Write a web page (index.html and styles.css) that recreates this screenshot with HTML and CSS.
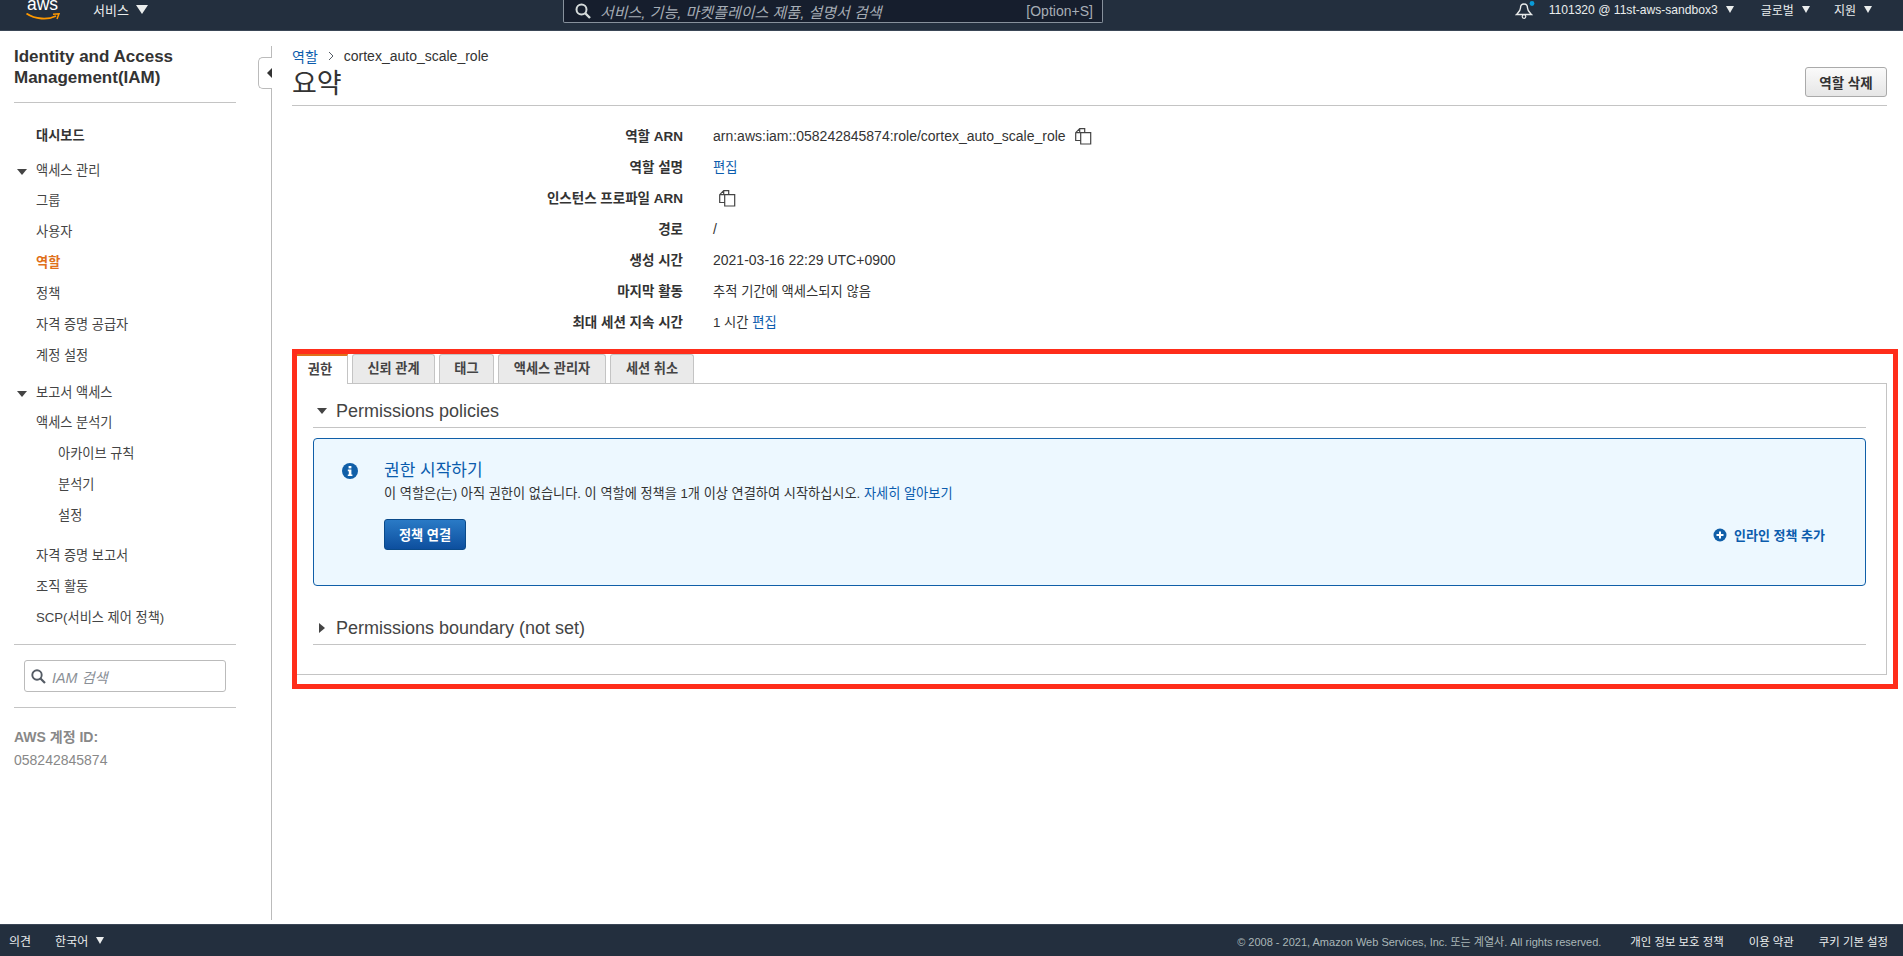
FILE: index.html
```html
<!DOCTYPE html>
<html lang="ko">
<head>
    <meta charset="UTF-8">
    <title>IAM 역할 요약</title>
    <link rel="stylesheet" href="styles.css">
</head>
<body>
    <header class="topbar">
        <div class="aws-logo">
            <span class="aws-word">aws</span>
            <svg class="aws-smile" width="34" height="8" viewBox="0 0 34 8">
                <path d="M0.5 0.5C9 6.5 22 7 30 3" fill="none" stroke="#f90" stroke-width="1.8"/>
                <path d="M27 1.2L33 0.8L31 6" fill="none" stroke="#f90" stroke-width="1.5"/>
            </svg>
        </div>
        <span class="top-link services">서비스</span><i class="caret caret-big"></i>
        <div class="top-search">
            <svg width="16" height="16" viewBox="0 0 16 16"><circle cx="6.5" cy="6.5" r="5" fill="none" stroke="#d5dbdb" stroke-width="2"/><path d="M10 10l5 5" stroke="#d5dbdb" stroke-width="2.4"/></svg>
            <span class="top-search-text">서비스, 기능, 마켓플레이스 제품, 설명서 검색</span>
            <span class="top-search-key">[Option+S]</span>
        </div>
        <div class="top-right">
            <svg class="bell" width="20" height="18" viewBox="0 0 20 18">
                <path d="M9 3C6.5 3 5.5 4.8 5.5 7C5.5 10 3.5 11.5 1.5 13.5H16.5C14.5 11.5 12.5 10 12.5 7C12.5 4.8 11.5 3 9 3Z" fill="none" stroke="#e8eaea" stroke-width="1.4"/>
                <circle cx="9" cy="15.5" r="1.8" fill="none" stroke="#e8eaea" stroke-width="1.2"/>
                <circle cx="17" cy="2.5" r="2.4" fill="#0a9bd8"/>
            </svg>
            <span class="top-link account">1101320 @ 11st-aws-sandbox3</span><i class="caret"></i>
            <span class="top-link region">글로벌</span><i class="caret"></i>
            <span class="top-link support">지원</span><i class="caret"></i>
        </div>
    </header>

    <div class="page">
        <aside class="sidebar">
            <h2 class="side-title">Identity and Access Management(IAM)</h2>
            <ul class="side-nav">
                <li class="side-item side-strong">대시보드</li>
                <li class="side-head"><i class="tri-down"></i>액세스 관리</li>
                <li class="side-item">그룹</li>
                <li class="side-item">사용자</li>
                <li class="side-item side-active">역할</li>
                <li class="side-item">정책</li>
                <li class="side-item">자격 증명 공급자</li>
                <li class="side-item">계정 설정</li>
                <li class="side-head side-head-second"><i class="tri-down"></i>보고서 액세스</li>
                <li class="side-item">액세스 분석기</li>
                <li class="side-item side-sub">아카이브 규칙</li>
                <li class="side-item side-sub">분석기</li>
                <li class="side-item side-sub">설정</li>
                <li class="side-item side-gap">자격 증명 보고서</li>
                <li class="side-item">조직 활동</li>
                <li class="side-item">SCP(서비스 제어 정책)</li>
            </ul>
            <div class="side-search-wrap">
                <div class="side-search">
                    <svg width="15" height="15" viewBox="0 0 15 15"><circle cx="6" cy="6" r="4.7" fill="none" stroke="#545b64" stroke-width="1.9"/><path d="M9.5 9.5l4.5 4.5" stroke="#545b64" stroke-width="2.2"/></svg>
                    <span>IAM 검색</span>
                </div>
            </div>
            <div class="side-account">
                <strong>AWS 계정 ID:</strong>
                <span>058242845874</span>
            </div>
            <div class="side-toggle"><i class="tri-left"></i></div>
        </aside>

        <main class="content">
            <div class="content-head">
                <div>
                    <div class="crumbs">
                        <a href="#">역할</a>
                        <svg width="8" height="10" viewBox="0 0 8 10"><path d="M2 1l4 4-4 4" fill="none" stroke="#545b64" stroke-width="1"/></svg>
                        <span>cortex_auto_scale_role</span>
                    </div>
                    <h1 class="page-title">요약</h1>
                </div>
                <button class="btn-grey" type="button">역할 삭제</button>
            </div>

            <div class="details">
                <div class="detail-row">
                    <span class="detail-label">역할 ARN</span>
                    <span>arn:aws:iam::058242845874:role/cortex_auto_scale_role
                        <svg class="copy-icon" width="17" height="17" viewBox="0 0 17 17"><path d="M5.5 12.5H0.7V4.7L4.7 0.7H9.7V4.7M4.7 0.7V4.7H0.7M5.7 4.7H15.7V16H5.7Z" fill="none" stroke="#444" stroke-width="1.2"/></svg>
                    </span>
                </div>
                <div class="detail-row">
                    <span class="detail-label">역할 설명</span>
                    <span class="ko"><a href="#">편집</a></span>
                </div>
                <div class="detail-row">
                    <span class="detail-label">인스턴스 프로파일 ARN</span>
                    <span>
                        <svg class="copy-icon" width="17" height="17" viewBox="0 0 17 17"><path d="M5.5 12.5H0.7V4.7L4.7 0.7H9.7V4.7M4.7 0.7V4.7H0.7M5.7 4.7H15.7V16H5.7Z" fill="none" stroke="#444" stroke-width="1.2"/></svg>
                    </span>
                </div>
                <div class="detail-row">
                    <span class="detail-label">경로</span>
                    <span>/</span>
                </div>
                <div class="detail-row">
                    <span class="detail-label">생성 시간</span>
                    <span>2021-03-16 22:29 UTC+0900</span>
                </div>
                <div class="detail-row">
                    <span class="detail-label">마지막 활동</span>
                    <span class="ko">추적 기간에 액세스되지 않음</span>
                </div>
                <div class="detail-row">
                    <span class="detail-label">최대 세션 지속 시간</span>
                    <span class="ko">1 시간 <a href="#">편집</a></span>
                </div>
            </div>

            <div class="tab-area">
                <div class="tabs">
                    <div class="tab tab-active">권한</div>
                    <div class="tab tab-trust">신뢰 관계</div>
                    <div class="tab tab-tag">태그</div>
                    <div class="tab tab-access">액세스 관리자</div>
                    <div class="tab tab-session">세션 취소</div>
                </div>
                <div class="tab-panel">
                    <div class="section-head"><i class="tri-down"></i>Permissions policies</div>
                    <div class="info-box">
                        <svg class="info-icon" width="16" height="16" viewBox="0 0 16 16">
                            <circle cx="8" cy="8" r="8" fill="#105fa8"/>
                            <rect x="6.6" y="3" width="2.8" height="2.4" fill="#fff"/>
                            <path d="M5.8 6.6H9.4V11.4H10.4V13H5.8V11.4H6.8V8.2H5.8Z" fill="#fff"/>
                        </svg>
                        <div class="info-body">
                            <div class="info-title">권한 시작하기</div>
                            <div class="info-text">이 역할은(는) 아직 권한이 없습니다. 이 역할에 정책을 1개 이상 연결하여 시작하십시오. <a href="#">자세히 알아보기</a></div>
                            <div class="info-actions">
                                <button class="btn-blue" type="button">정책 연결</button>
                                <a class="add-inline" href="#">
                                    <svg width="14" height="14" viewBox="0 0 14 14"><circle cx="7" cy="7" r="6.5" fill="#105fa8"/><path d="M7 3.5v7M3.5 7h7" stroke="#fff" stroke-width="2"/></svg>
                                    인라인 정책 추가
                                </a>
                            </div>
                        </div>
                    </div>
                    <div class="section-head section-boundary"><i class="tri-right"></i>Permissions boundary (not set)</div>
                </div>
                <div class="red-mark"></div>
            </div>
        </main>
    </div>

    <footer class="footer">
        <span class="foot-link">의견</span>
        <span class="foot-link foot-lang">한국어</span><i class="caret"></i>
        <div class="foot-right">
            <span class="foot-copy">© 2008 - 2021, Amazon Web Services, Inc. 또는 계열사. All rights reserved.</span>
            <span class="foot-link">개인 정보 보호 정책</span>
            <span class="foot-link">이용 약관</span>
            <span class="foot-link">쿠키 기본 설정</span>
        </div>
    </footer>
</body>
</html>
```

FILE: styles.css
```css
body {
    margin: 0;
    height: 100vh;
    display: flex;
    flex-direction: column;
    overflow: hidden;
    background: #fff;
    color: #16191f;
    font-family: "Liberation Sans", "Noto Sans CJK KR", sans-serif;
    font-size: 14px;
}

a {
    color: #0b5cad;
    text-decoration: none;
}

ul {
    list-style: none;
    margin: 0;
    padding: 0;
}

/* top bar */
.topbar {
    flex: none;
    height: 19px;
    padding-bottom: 11px;
    display: flex;
    align-items: center;
    background: #232f3e;
    border-bottom: 1px solid #3a4656;
    color: #eaeded;
    font-size: 13px;
    overflow: hidden;
}

.aws-logo {
    position: relative;
    align-self: flex-start;
    width: 36px;
    height: 20px;
    margin-left: 26px;
}

.aws-word {
    position: absolute;
    left: 1px;
    top: -8px;
    color: #fff;
    font-size: 17.5px;
    line-height: 24px;
}

.aws-smile {
    position: absolute;
    left: 0;
    top: 13px;
}

.top-link {
    white-space: nowrap;
}

.services {
    margin-left: 31px;
}

.caret {
    display: inline-block;
    width: 0;
    height: 0;
    margin-left: 8px;
    border-left: 4.5px solid transparent;
    border-right: 4.5px solid transparent;
    border-top: 7px solid #eaeded;
}

.caret-big {
    margin-left: 7px;
    border-left-width: 6px;
    border-right-width: 6px;
    border-top-width: 9px;
}

.top-search {
    display: flex;
    align-items: center;
    align-self: flex-start;
    box-sizing: border-box;
    width: 540px;
    height: 23px;
    margin-left: 415px;
    padding: 0 9px 0 11px;
    background: #161e2d;
    border: 1px solid #87919c;
    border-top: none;
    border-radius: 0 0 2px 2px;
    color: #a6adb5;
}

.top-search-text {
    margin-left: 9px;
    font-size: 15px;
    font-style: italic;
}

.top-search-key {
    margin-left: auto;
    font-size: 14px;
}

.top-right {
    display: flex;
    align-items: center;
    margin-left: auto;
    padding-right: 31px;
    font-size: 12px;
}

.account {
    margin-left: 14px;
    font-size: 12.1px;
}

.region {
    margin-left: 27px;
}

.support {
    margin-left: 24px;
}

/* sidebar */
.page {
    flex: 1;
    display: flex;
    min-height: 0;
}

.sidebar {
    position: relative;
    flex: none;
    box-sizing: border-box;
    width: 272px;
    margin: 15px 0 4px;
    padding-left: 14px;
    border-right: 1px solid #bbb;
}

.side-title {
    width: 222px;
    margin: 0;
    padding-bottom: 14px;
    border-bottom: 1px solid #c4c4c4;
    font-size: 17px;
    line-height: 21px;
    color: #333;
}

.side-nav {
    width: 222px;
    padding: 17px 0 11px;
    border-bottom: 1px solid #c4c4c4;
    color: #444;
    font-size: 13.2px;
}

.side-item {
    height: 31px;
    line-height: 31px;
    padding-left: 22px;
}

.side-strong {
    font-weight: bold;
    color: #333;
    height: 37px;
}

.side-active {
    color: #e0701a;
    font-weight: bold;
}

.side-head {
    height: 28px;
    line-height: 28px;
    padding-left: 22px;
    position: relative;
}

.side-head-second {
    margin-top: 8px;
}

.side-sub {
    padding-left: 44px;
}

.side-gap {
    margin-top: 9px;
}

.tri-down,
.tri-right,
.tri-left {
    display: inline-block;
    width: 0;
    height: 0;
}

.tri-down {
    border-left: 5px solid transparent;
    border-right: 5px solid transparent;
    border-top: 6px solid #444;
}

.tri-right {
    border-top: 5px solid transparent;
    border-bottom: 5px solid transparent;
    border-left: 6px solid #444;
}

.side-head .tri-down {
    position: absolute;
    left: 3px;
    top: 12px;
}

.side-search-wrap {
    width: 222px;
    padding: 15px 0;
    border-bottom: 1px solid #c4c4c4;
}

.side-search {
    display: flex;
    align-items: center;
    box-sizing: border-box;
    width: 202px;
    height: 32px;
    margin-left: 10px;
    padding-left: 6px;
    gap: 6px;
    border: 1px solid #bbb;
    border-radius: 3px;
    color: #8a8f96;
    font-size: 14.3px;
    font-style: italic;
}

.side-account {
    display: flex;
    flex-direction: column;
    gap: 6px;
    margin-top: 18px;
    color: #888;
}

.side-toggle {
    position: absolute;
    top: 11px;
    right: -1px;
    display: flex;
    align-items: center;
    justify-content: flex-end;
    box-sizing: border-box;
    width: 14px;
    height: 32px;
    background: #fff;
    border: 1px solid #bbb;
    border-right: none;
    border-radius: 5px 0 0 5px;
}

.tri-left {
    border-top: 5px solid transparent;
    border-bottom: 5px solid transparent;
    border-right: 5px solid #333;
}

/* main content */
.content {
    flex: 1;
    min-width: 0;
    padding: 15px 16px 0 20px;
}

.content-head {
    display: flex;
    justify-content: space-between;
    align-items: flex-end;
    padding-bottom: 7px;
    border-bottom: 1px solid #c4c4c4;
}

.crumbs {
    display: flex;
    align-items: center;
    gap: 9px;
    height: 20px;
    color: #333;
}

.page-title {
    margin: 0;
    padding-top: 5px;
    font-size: 27px;
    font-weight: normal;
    line-height: 27px;
    color: #333;
}

.btn-grey {
    box-sizing: border-box;
    width: 82px;
    height: 30px;
    margin-bottom: 1px;
    padding: 0;
    border: 1px solid #aaa;
    border-radius: 3px;
    background: linear-gradient(#fafafa, #e6e6e6);
    color: #333;
    font-family: inherit;
    font-size: 13.5px;
    font-weight: bold;
}

.details {
    padding-top: 15px;
}

.detail-row {
    display: grid;
    grid-template-columns: 391px 1fr;
    column-gap: 30px;
    height: 31px;
    line-height: 31px;
    color: #333;
}

.detail-label {
    text-align: right;
    font-size: 13.5px;
    font-weight: bold;
}

.ko {
    font-size: 13.3px;
}

.copy-icon {
    margin-left: 6px;
    vertical-align: -4px;
}

/* tabs */
.tab-area {
    position: relative;
    margin-top: 16px;
}

.tabs {
    display: flex;
    gap: 4px;
    height: 29px;
}

.tab {
    box-sizing: border-box;
    height: 29px;
    line-height: 28px;
    text-align: center;
    background: #eaeaea;
    border: 1px solid #c4c4c4;
    border-bottom: none;
    border-radius: 3px 3px 0 0;
    color: #444;
    font-size: 13.2px;
    font-weight: bold;
}

.tab-trust {
    width: 83px;
}

.tab-tag {
    width: 55px;
}

.tab-access {
    width: 108px;
}

.tab-session {
    width: 84px;
}

.tab-active {
    position: relative;
    z-index: 1;
    width: 56px;
    height: 30px;
    background: #fff;
    border-top: 2px solid #e0701a;
    border-radius: 0;
}

.tab-panel {
    box-sizing: border-box;
    height: 292px;
    padding: 14px 20px 0;
    border: 1px solid #c4c4c4;
}

.section-head {
    display: flex;
    align-items: center;
    height: 26px;
    padding-bottom: 3px;
    border-bottom: 1px solid #c4c4c4;
    color: #444;
    font-size: 18px;
}

.section-head .tri-down {
    margin: 0 9px 0 4px;
}

.section-head .tri-right {
    margin: 0 11px 0 6px;
}

.section-boundary {
    margin-top: 29px;
}

.info-box {
    display: flex;
    box-sizing: border-box;
    height: 148px;
    margin-top: 10px;
    padding: 20px 40px 0 28px;
    background: #edf8ff;
    border: 1px solid #105fa8;
    border-radius: 4px;
}

.info-icon {
    flex: none;
    margin: 4px 26px 0 0;
}

.info-body {
    flex: 1;
}

.info-title {
    color: #0b5cad;
    font-size: 17px;
    line-height: 24px;
}

.info-text {
    margin-top: 1px;
    line-height: 20px;
    font-size: 13.2px;
    color: #333;
}

.info-actions {
    display: flex;
    justify-content: space-between;
    align-items: center;
    margin-top: 15px;
}

.btn-blue {
    box-sizing: border-box;
    width: 82px;
    height: 31px;
    padding: 0;
    border: 1px solid #0a4a8a;
    border-radius: 3px;
    background: linear-gradient(#2a7ac6, #0d4f9e);
    color: #fff;
    font-family: inherit;
    font-size: 13.2px;
    font-weight: bold;
}

.add-inline {
    display: flex;
    align-items: center;
    gap: 7px;
    font-size: 13px;
    font-weight: bold;
}

.red-mark {
    position: absolute;
    left: 0;
    top: -5px;
    width: 1606px;
    height: 340px;
    box-sizing: border-box;
    border: 5px solid #ff2d1a;
    z-index: 2;
}

/* footer */
.footer {
    flex: none;
    box-sizing: border-box;
    height: 32px;
    display: flex;
    align-items: center;
    padding: 0 15px 0 9px;
    background: #232f3e;
    border-top: 1px solid #3a4656;
    color: #eaeded;
    font-size: 12px;
}

.foot-lang {
    margin-left: 24px;
}

.foot-right {
    display: flex;
    align-items: center;
    gap: 25px;
    margin-left: auto;
}

.foot-right .foot-link {
    font-size: 11.4px;
}

.foot-copy {
    margin-right: 4px;
    color: #aab7b8;
    font-size: 11px;
}
```
